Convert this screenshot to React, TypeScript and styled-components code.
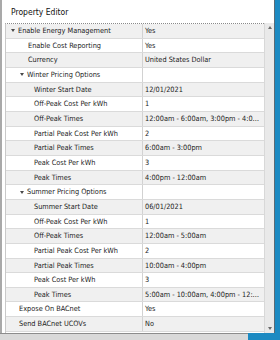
import React from 'react'
import styled, {createGlobalStyle} from 'styled-components'

type RowData = {
    label: string;
    value: string;
    indent: number;
    group?: boolean;
}

const rows: RowData[] = [
    {label: 'Enable Energy Management', value: 'Yes', indent: 13, group: true},
    {label: 'Enable Cost Reporting', value: 'Yes', indent: 22},
    {label: 'Currency', value: 'United States Dollar', indent: 22},
    {label: 'Winter Pricing Options', value: '', indent: 22, group: true},
    {label: 'Winter Start Date', value: '12/01/2021', indent: 28},
    {label: 'Off-Peak Cost Per kWh', value: '1', indent: 28},
    {label: 'Off-Peak Times', value: '12:00am - 6:00am, 3:00pm - 4:00pm', indent: 28},
    {label: 'Partial Peak Cost Per kWh', value: '2', indent: 28},
    {label: 'Partial Peak Times', value: '6:00am - 3:00pm', indent: 28},
    {label: 'Peak Cost Per kWh', value: '3', indent: 28},
    {label: 'Peak Times', value: '4:00pm - 12:00am', indent: 28},
    {label: 'Summer Pricing Options', value: '', indent: 22, group: true},
    {label: 'Summer Start Date', value: '06/01/2021', indent: 28},
    {label: 'Off-Peak Cost Per kWh', value: '1', indent: 28},
    {label: 'Off-Peak Times', value: '12:00am - 5:00am', indent: 28},
    {label: 'Partial Peak Cost Per kWh', value: '2', indent: 28},
    {label: 'Partial Peak Times', value: '10:00am - 4:00pm', indent: 28},
    {label: 'Peak Cost Per kWh', value: '3', indent: 28},
    {label: 'Peak Times', value: '5:00am - 10:00am, 4:00pm - 12:00am', indent: 28},
    {label: 'Expose On BACnet', value: 'Yes', indent: 13},
    {label: 'Send BACnet UCOVs', value: 'No', indent: 13},
]

export default function App() {
    return (
        <>
            <GlobalStyle/>
            <Screen>
                <LeftEdge/>
                <Window>
                    <Title>Property Editor</Title>
                    <Body>
                        <Table>
                            {rows.map((r, i) => (
                                <Row key={i} $alt={i % 2 === 0}>
                                    <Label $indent={r.group ? r.indent - 8 : r.indent}>
                                        {r.group && <Caret/>}
                                        <span>{r.label}</span>
                                    </Label>
                                    <Value>{r.value}</Value>
                                </Row>
                            ))}
                        </Table>
                        <Scrollbar>
                            <ArrowBox><Arrow $up/></ArrowBox>
                            <ArrowBox><Arrow/></ArrowBox>
                        </Scrollbar>
                    </Body>
                </Window>
                <RightEdge/>
                <BottomStrip>
                    <BottomGray/>
                    <BottomBlue/>
                </BottomStrip>
            </Screen>
        </>
    )
}

const GlobalStyle = createGlobalStyle`
  body {
    margin: 0;
    background: #fff;
  }
`
const Screen = styled.div`
  width: 280px;
  height: 340px;
  display: grid;
  grid-template-columns: 2px 272px 6px;
  grid-template-rows: 333px 7px;
  overflow: hidden;
  font-family: "DejaVu Sans Condensed", "DejaVu Sans", sans-serif;
  color: #1b1b1b;
`
const LeftEdge = styled.div`
  background: #a9a9a9;
`
const RightEdge = styled.div`
  background: #1c8ac2;
  border-left: 1px solid #5a6b76;
`
const BottomStrip = styled.div`
  grid-column: 1 / 4;
  display: flex;
`
const BottomGray = styled.div`
  flex: 1;
  background: #d9d9d9;
  border-top: 1px solid #8c8c8c;
`
const BottomBlue = styled.div`
  width: 32px;
  background: #1c8ac2;
`
const Window = styled.div`
  display: flex;
  flex-direction: column;
  background: #fff;
  min-width: 0;
`
const Title = styled.div`
  height: 23px;
  padding-left: 9px;
  display: flex;
  align-items: center;
  font-size: 8.5px;
  color: #111;
`
const Body = styled.div`
  flex: 1;
  display: flex;
  padding-left: 3px;
  min-height: 0;
`
const Table = styled.div`
  flex: 1;
  min-width: 0;
  border-top: 1px dotted #8a8a8a;
  border-left: 1px solid #c9c9c9;
  display: flex;
  flex-direction: column;
`
const Row = styled.div<{ $alt: boolean }>`
  height: 14.67px;
  box-sizing: border-box;
  display: grid;
  grid-template-columns: 137px 1fr;
  background: ${p => p.$alt ? '#f0f0f0' : '#fff'};
  border-bottom: 1px solid #dadada;
  font-size: 7.3px;
  line-height: 13.67px;
`
const Label = styled.div<{ $indent: number }>`
  display: flex;
  align-items: center;
  gap: 3px;
  padding-left: ${p => p.$indent}px;
  border-right: 1px solid #d2d2d2;
  white-space: nowrap;
  overflow: hidden;
`
const Caret = styled.i`
  flex: none;
  width: 0;
  height: 0;
  border-left: 2.5px solid transparent;
  border-right: 2.5px solid transparent;
  border-top: 3px solid #4a4a4a;
`
const Value = styled.div`
  padding-left: 2px;
  white-space: nowrap;
  overflow: hidden;
  text-overflow: ellipsis;
  padding-right: 4px;
`
const Scrollbar = styled.div`
  width: 9px;
  background: #e9e9e9;
  border-left: 1px solid #d8d8d8;
  display: flex;
  flex-direction: column;
  justify-content: space-between;
`
const ArrowBox = styled.div`
  height: 9px;
  display: flex;
  align-items: center;
  justify-content: center;
`
const Arrow = styled.i<{ $up?: boolean }>`
  width: 0;
  height: 0;
  border-left: 2.5px solid transparent;
  border-right: 2.5px solid transparent;
  ${p => p.$up ? 'border-bottom: 3px solid #6a6a6a;' : 'border-top: 3px solid #6a6a6a;'}
`
